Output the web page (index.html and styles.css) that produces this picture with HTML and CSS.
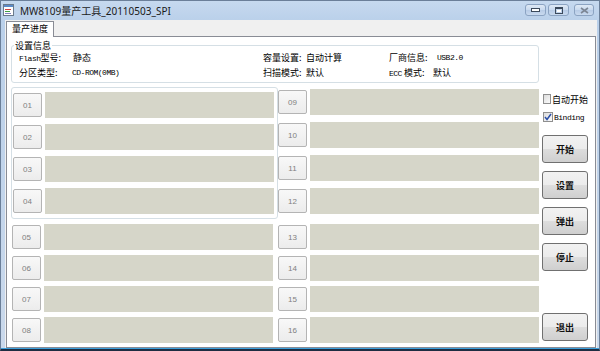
FILE: index.html
```html
<!DOCTYPE html>
<html lang="zh-CN">
<head>
    <meta charset="UTF-8">
    <title>MW8109量产工具_20110503_SPI</title>
    <link rel="stylesheet" href="styles.css">
</head>
<body>
    <div class="window">
        <div class="titlebar">
            <svg class="app-icon" width="11" height="12" viewBox="0 0 11 12">
                <rect x="0.5" y="0.5" width="10" height="11" fill="#fff" stroke="#6a7a8c"/>
                <rect x="1" y="1" width="9" height="2" fill="#5a8ac8"/>
                <rect x="2" y="5" width="6" height="1" fill="#d04040"/>
                <rect x="2" y="7" width="5" height="1" fill="#40a040"/>
                <rect x="2" y="9" width="6" height="1" fill="#8080c0"/>
            </svg>
            <span class="title">MW8109量产工具_20110503_SPI</span>
            <div class="caption-btns">
                <span class="cap-btn">
                    <svg width="9" height="4" viewBox="0 0 9 4"><rect x="0.5" y="0.5" width="8" height="3" fill="#fff" stroke="#3c4a5c"/></svg>
                </span>
                <span class="cap-btn">
                    <svg width="8" height="7" viewBox="0 0 8 7"><rect x="0.5" y="0.5" width="7" height="6" fill="none" stroke="#3c4a5c"/><rect x="1" y="1" width="6" height="1" fill="#3c4a5c"/><rect x="2" y="3" width="4" height="2" fill="#fff"/></svg>
                </span>
                <span class="cap-btn close">
                    <svg width="9" height="7" viewBox="0 0 9 7"><path d="M1 1 L8 6 M8 1 L1 6" stroke="#7d8796" stroke-width="1.6"/></svg>
                </span>
            </div>
        </div>
        <div class="client">
            <div class="tabs">
                <div class="tab">量产进度</div>
            </div>
            <div class="panel">
                <fieldset class="info">
                    <legend>设置信息</legend>
                    <div class="info-grid">
                        <span><span class="en">Flash</span>型号:</span>
                        <span class="val1">静态</span>
                        <span>容量设置:</span>
                        <span>自动计算</span>
                        <span>厂商信息:</span>
                        <span class="en usb">USB2.0</span>

                        <span>分区类型:</span>
                        <span class="en">CD-ROM(0MB)</span>
                        <span>扫描模式:</span>
                        <span>默认</span>
                        <span><span class="en">ECC</span> 模式:</span>
                        <span>默认</span>
                    </div>
                </fieldset>

                <div class="main">
                    <div class="col col-left">
                        <div class="group">
                            <div class="slot"><span class="num">01</span><span class="bar"></span></div>
                            <div class="slot"><span class="num">02</span><span class="bar"></span></div>
                            <div class="slot"><span class="num">03</span><span class="bar"></span></div>
                            <div class="slot"><span class="num">04</span><span class="bar"></span></div>
                        </div>
                        <div class="lower">
                            <div class="slot"><span class="num">05</span><span class="bar"></span></div>
                            <div class="slot"><span class="num">06</span><span class="bar"></span></div>
                            <div class="slot"><span class="num">07</span><span class="bar"></span></div>
                            <div class="slot"><span class="num">08</span><span class="bar"></span></div>
                        </div>
                    </div>
                    <div class="col col-right">
                        <div class="upper">
                            <div class="slot"><span class="num">09</span><span class="bar"></span></div>
                            <div class="slot"><span class="num">10</span><span class="bar"></span></div>
                            <div class="slot"><span class="num">11</span><span class="bar"></span></div>
                            <div class="slot"><span class="num">12</span><span class="bar"></span></div>
                        </div>
                        <div class="lower">
                            <div class="slot"><span class="num">13</span><span class="bar"></span></div>
                            <div class="slot"><span class="num">14</span><span class="bar"></span></div>
                            <div class="slot"><span class="num">15</span><span class="bar"></span></div>
                            <div class="slot"><span class="num">16</span><span class="bar"></span></div>
                        </div>
                    </div>
                    <div class="side">
                        <label class="check"><span class="box"></span>自动开始</label>
                        <label class="check check2">
                            <span class="box">
                                <svg width="8" height="8" viewBox="0 0 8 8"><path d="M1 4 L3 6.5 L7 1" fill="none" stroke="#2a4fa8" stroke-width="1.5"/></svg>
                            </span>
                            <span class="en">Binding</span>
                        </label>
                        <button class="btn first">开始</button>
                        <button class="btn">设置</button>
                        <button class="btn">弹出</button>
                        <button class="btn">停止</button>
                        <button class="btn exit">退出</button>
                    </div>
                </div>
            </div>
        </div>
    </div>
</body>
</html>
```

FILE: styles.css
```css
body {
    margin: 0;
    font-family: "Noto Sans CJK SC", sans-serif;
    font-size: 9px;
    color: #000;
}

.window {
    width: 600px;
    height: 351px;
    box-sizing: border-box;
    border: 1px solid #6b7f99;
    border-bottom: 2px solid #1e2d42;
    padding: 0 2px 1px 4px;
    background: linear-gradient(#c6d9ef, #bad0ea 20px, #cad9ec);
    box-shadow: inset 0 -1px 0 #3a9fdc;
    display: flex;
    flex-direction: column;
}

.titlebar {
    height: 19px;
    margin: 0 -2px 0 -4px;
    padding: 0 5px 0 2px;
    display: flex;
    align-items: center;
}

.app-icon {
    margin-right: 6px;
    margin-top: -2px;
}

.title {
    font-family: "Noto Sans", "Noto Sans CJK SC", sans-serif;
    font-size: 10px;
    color: #1a1a1a;
}

.caption-btns {
    margin-left: auto;
    align-self: flex-start;
    margin-top: 3px;
    display: flex;
    gap: 2px;
}

.cap-btn {
    width: 21px;
    height: 12px;
    box-sizing: border-box;
    border: 1px solid #8ba3c2;
    border-radius: 3px;
    background: linear-gradient(#dfe9f5, #c8d9ee 50%, #b7cbe6 51%, #c9daef);
    display: flex;
    align-items: center;
    justify-content: center;
}

.cap-btn.close {
    width: 20px;
    margin-left: 3px;
}

.client {
    flex: 1;
    background: #f0f0f0;
    padding: 0 1px;
    display: flex;
    flex-direction: column;
}

.tabs {
    height: 16px;
    display: flex;
}

.tab {
    position: relative;
    z-index: 1;
    margin-top: 1px;
    width: 48px;
    height: 16px;
    box-sizing: border-box;
    border: 1px solid #898c95;
    border-bottom: none;
    background: #fff;
    text-align: center;
    line-height: 14px;
}

.panel {
    flex: 1;
    border: 1px solid #898c95;
    background: #fff;
    display: flex;
    flex-direction: column;
}

.info {
    margin: 3px 0 0 4px;
    width: 528px;
    box-sizing: border-box;
    border: 1px solid #d5dfe5;
    border-radius: 3px;
    padding: 0 0 2px 7px;
}

.info legend {
    padding: 0 1px;
    margin-left: -5px;
    line-height: 11px;
}

.info-grid {
    display: grid;
    grid-template-columns: 53px 191px 43px 83px 44px 1fr;
    grid-auto-rows: 15px;
    align-items: center;
    margin-top: -1px;
    white-space: nowrap;
}

.en {
    font-family: "Liberation Mono", monospace;
    font-size: 8px;
    letter-spacing: -0.5px;
}

.val1 {
    margin-left: 1px;
}

.usb {
    margin-left: 4px;
}

.main {
    flex: 1;
    margin-top: 4px;
    padding-left: 4px;
    display: flex;
}

.col-left {
    width: 267px;
}

.col-right {
    width: 261px;
}

.group {
    height: 132px;
    box-sizing: border-box;
    border: 1px solid #d5dfe5;
    border-radius: 3px;
    padding: 4px 3px 0 1px;
    display: flex;
    flex-direction: column;
    gap: 6px;
}

.upper {
    height: 132px;
    box-sizing: border-box;
    padding-top: 2px;
    display: flex;
    flex-direction: column;
    gap: 7px;
}

.lower {
    margin-top: 5px;
    display: flex;
    flex-direction: column;
    gap: 5px;
}

.col-left .lower {
    padding-left: 1px;
}

.slot {
    height: 26px;
    display: flex;
    align-items: center;
    gap: 3px;
}

.num {
    width: 29px;
    height: 24px;
    box-sizing: border-box;
    border: 1px solid #b4b4b4;
    border-radius: 2px;
    background: linear-gradient(#f8f8f8, #ececec);
    font-family: "Liberation Sans", sans-serif;
    font-size: 8px;
    color: #808080;
    display: flex;
    align-items: center;
    justify-content: center;
}

.bar {
    width: 229px;
    height: 26px;
    background: #d6d6c9;
}

.side {
    width: 46px;
    margin-left: 3px;
    padding: 6px 0 6px;
    display: flex;
    flex-direction: column;
}

.check {
    height: 12px;
    display: flex;
    align-items: center;
    gap: 1px;
    white-space: nowrap;
}

.check2 {
    margin-top: 6px;
}

.box {
    width: 10px;
    height: 10px;
    margin-left: 1px;
    box-sizing: border-box;
    border: 1px solid #8f8f8f;
    background: linear-gradient(135deg, #dcdcdc, #fbfbfb);
    display: flex;
    align-items: center;
    justify-content: center;
}

.btn {
    width: 46px;
    height: 28px;
    margin-top: 8px;
    padding: 0;
    box-sizing: border-box;
    border: 1px solid #707070;
    border-radius: 3px;
    background: linear-gradient(#f2f2f2, #ebebeb 50%, #dddddd 51%, #cfcfcf);
    font-family: "Noto Sans CJK SC", sans-serif;
    font-size: 9px;
    font-weight: 700;
    color: #111;
}

.btn.first {
    margin-top: 12px;
}

.btn.exit {
    margin-top: auto;
}
```
